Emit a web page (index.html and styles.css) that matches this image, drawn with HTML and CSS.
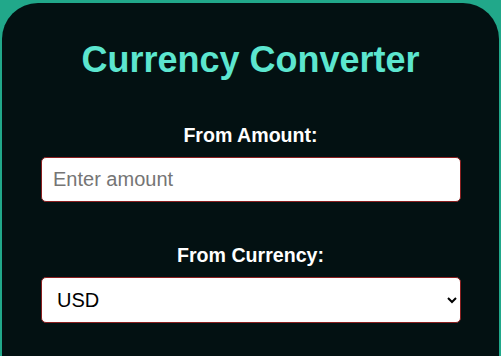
FILE: index.html
```html
<!DOCTYPE html>
<html lang="en">

<head>
    <meta charset="UTF-8">
    <meta name="viewport" content="width=device-width, initial-scale=1.0">
    <title>Currency Converter</title>
    <link rel="stylesheet" href="styles.css">
</head>

<body>

    <div class="container">
        <h1>Currency Converter</h1>

        <!-- 금액 입력 -->
        <div class="field">
            <label for="amount">From Amount:</label>
            <input id="amount" type="number" placeholder="Enter amount">
        </div>

        <!-- 통화 선택 -->
        <div class="field">
            <label for="fromCurrency">From Currency:</label>
            <select id="fromCurrency">
                <option>USD</option>
                <option>EUR</option>
                <option>GBP</option>
                <option>JPY</option>
                <option>INR</option>
            </select>
        </div>
    </div>

</body>

</html>
```

FILE: styles.css
```css
body {
    margin: 0;
    background-color: #21a88a;
    font-family: "Liberation Sans", Arial, sans-serif;
}

.container {
    box-sizing: border-box;
    margin: 3px 2px 0 2px;
    height: 353px;
    padding: 36px 39px 0 39px;
    background-color: #031112;
    border-radius: 36px 36px 0 0;
}

.container h1 {
    margin: 0;
    text-align: center;
    font-size: 36px;
    line-height: 41px;
    color: #5ce6cf;
}

.field {
    margin-top: 44px;
}

.field + .field {
    margin-top: 42px;
}

.field label {
    display: block;
    margin-bottom: 10px;
    text-align: center;
    color: white;
    font-size: 19.6px;
    line-height: 23px;
    font-weight: bold;
}

.field input,
.field select {
    display: block;
    box-sizing: border-box;
    width: 420px;
    height: 45px;
    padding: 0 11px;
    border: 1px solid #8a1f1f;
    border-radius: 5px;
    background-color: white;
    font-family: inherit;
    font-size: 20px;
    color: black;
}

.field select {
    height: 46px;
}

.field input::placeholder {
    color: #757575;
}
```
